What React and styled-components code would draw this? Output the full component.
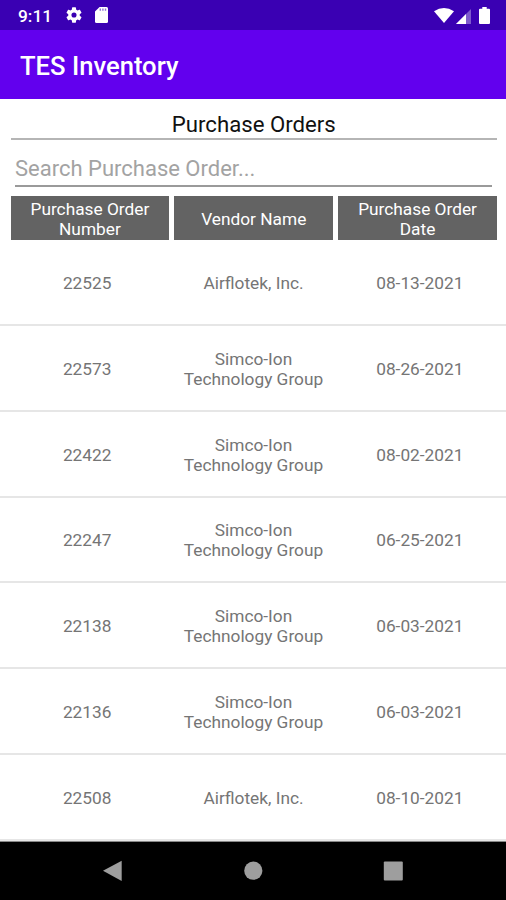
import React from 'react';
import styled, { createGlobalStyle } from 'styled-components';

const orders = [
    { number: '22525', vendor: 'Airflotek, Inc.', date: '08-13-2021' },
    { number: '22573', vendor: 'Simco-Ion Technology Group', date: '08-26-2021' },
    { number: '22422', vendor: 'Simco-Ion Technology Group', date: '08-02-2021' },
    { number: '22247', vendor: 'Simco-Ion Technology Group', date: '06-25-2021' },
    { number: '22138', vendor: 'Simco-Ion Technology Group', date: '06-03-2021' },
    { number: '22136', vendor: 'Simco-Ion Technology Group', date: '06-03-2021' },
    { number: '22508', vendor: 'Airflotek, Inc.', date: '08-10-2021' },
];

const App = () => {
    return (
        <Screen>
            <GlobalStyle />
            <StatusBar>
                <Clock>9:11</Clock>
                <Gear viewBox="2 2 20 20">
                    <path d="M19.14 12.94c.04-.3.06-.61.06-.94s-.02-.64-.07-.94l2.03-1.58a.49.49 0 0 0 .12-.61l-1.92-3.32a.49.49 0 0 0-.59-.22l-2.39.96a7 7 0 0 0-1.62-.94l-.36-2.54a.48.48 0 0 0-.48-.41h-3.84a.47.47 0 0 0-.47.41l-.36 2.54c-.59.24-1.13.57-1.62.94l-2.39-.96a.48.48 0 0 0-.59.22L2.74 8.87a.47.47 0 0 0 .12.61l2.03 1.58c-.05.3-.09.63-.09.94s.02.64.07.94l-2.03 1.58a.49.49 0 0 0-.12.61l1.92 3.32c.12.22.37.29.59.22l2.39-.96c.5.38 1.03.7 1.62.94l.36 2.54c.05.24.24.41.48.41h3.84c.24 0 .44-.17.47-.41l.36-2.54a6.8 6.8 0 0 0 1.62-.94l2.39.96c.22.08.47 0 .59-.22l1.92-3.32a.47.47 0 0 0-.12-.61zM12 15.2a3.2 3.2 0 1 1 0-6.4 3.2 3.2 0 0 1 0 6.4z" />
                </Gear>
                <Card viewBox="0 0 13 16">
                    <path d="M4.6 0H11.5Q13 0 13 1.5V14.5Q13 16 11.5 16H1.5Q0 16 0 14.5V4.6Z" />
                    <Contacts d="M4.6 1.6H6V3.8H4.6ZM7.2 1.6H8.6V3.8H7.2ZM9.8 1.6H11.2V3.8H9.8Z" />
                </Card>
                <Signals>
                    <Wifi viewBox="0 0 20 15">
                        <path d="M0 3.2Q10-3.2 20 3.2L10 15Z" />
                    </Wifi>
                    <Cell viewBox="0 0 15 15">
                        <path opacity=".35" d="M15 0V15H0Z" />
                        <path d="M10 5V15H0Z" />
                    </Cell>
                    <Battery viewBox="0 0 11 17">
                        <path d="M3.3 0H7.7V1.7H10Q11 1.7 11 2.7V16Q11 17 10 17H1Q0 17 0 16V2.7Q0 1.7 1 1.7H3.3Z" />
                    </Battery>
                </Signals>
            </StatusBar>
            <AppBar>TES Inventory</AppBar>
            <Title>Purchase Orders</Title>
            <Search placeholder="Search Purchase Order..." />
            <Headings>
                <Heading>Purchase Order Number</Heading>
                <Heading>Vendor Name</Heading>
                <Heading>Purchase Order Date</Heading>
            </Headings>
            <List>
                {orders.map((order) => (
                    <Row key={order.number}>
                        <Value>{order.number}</Value>
                        <Value>{order.vendor}</Value>
                        <Value>{order.date}</Value>
                    </Row>
                ))}
            </List>
            <NavBar>
                <NavIcon viewBox="0 0 20 22">
                    <path d="M18.7 .7V21L0 10.8Z" />
                </NavIcon>
                <NavIcon viewBox="0 0 20 22">
                    <circle cx="10.3" cy="10.7" r="9.1" />
                </NavIcon>
                <NavIcon viewBox="0 0 20 22">
                    <rect x=".8" y="1.5" width="19" height="19" rx="1" />
                </NavIcon>
            </NavBar>
        </Screen>
    );
};

const GlobalStyle = createGlobalStyle`
    body {
        margin: 0;
        background: #fff;
        font-family: Roboto, sans-serif;
    }
    * {
        box-sizing: border-box;
    }
`

const Screen = styled.main`
    display: flex;
    flex-direction: column;
    width: 506px;
    height: 900px;
    overflow: hidden;
`

const StatusBar = styled.header`
    display: flex;
    align-items: center;
    height: 30px;
    padding: 0 16px 0 18px;
    background: #3a00b3;

    svg {
        fill: #fff;
    }
`

const Clock = styled.span`
    width: 48px;
    padding-top: 2px;
    color: #fff;
    font-size: 17.3px;
    font-weight: 500;
`

const Gear = styled.svg`
    width: 16px;
    height: 16px;
`

const Card = styled.svg`
    width: 13px;
    height: 16px;
    margin-left: 13px;
`

const Contacts = styled.path`
    fill: #8f70d6;
`

const Signals = styled.div`
    display: flex;
    align-items: flex-end;
    margin-left: auto;
`

const Wifi = styled.svg`
    width: 20px;
    height: 15px;
    margin-bottom: 1px;
`

const Cell = styled.svg`
    width: 15px;
    height: 15px;
    margin: 0 8px 0 2px;
`

const Battery = styled.svg`
    width: 11px;
    height: 17px;
`

const AppBar = styled.div`
    display: flex;
    align-items: center;
    height: 68.6px;
    padding: 3px 20px 0;
    background: #6200ee;
    color: #fff;
    font-size: 25.6px;
    font-weight: 500;
`

const Title = styled.h1`
    height: 41.8px;
    margin: 0 9px 0 10.5px;
    padding-top: 11px;
    border-bottom: 2px solid #b5b5b5;
    color: #111;
    font-size: 22.2px;
    font-weight: 400;
    line-height: 28px;
    text-align: center;
`

const Search = styled.input`
    height: 46.6px;
    margin: 0 14px 0 15px;
    padding: 12px 0 0;
    border: 0;
    border-bottom: 2px solid #9a9a9a;
    outline: 0;
    font-family: inherit;
    font-size: 22px;

    &::placeholder {
        color: #a3a3a3;
    }
`

const Headings = styled.div`
    display: grid;
    grid-template-columns: repeat(3, 1fr);
    gap: 5px;
    height: 44px;
    margin: 9px 9px 0 10.5px;
`

const Heading = styled.div`
    display: flex;
    align-items: center;
    justify-content: center;
    padding: 2px 14px 0;
    background: #636363;
    color: #fff;
    font-size: 17.3px;
    line-height: 20px;
    text-align: center;
`

const List = styled.section`
    display: flex;
    flex-direction: column;
    height: 602px;
    border-bottom: 1px solid #888;
`

const Row = styled.div`
    display: grid;
    grid-template-columns: repeat(3, 1fr);
    align-items: center;
    flex: 0 0 85.85px;
    padding: 2px 3px 0 4px;
    border-bottom: 2px solid #e6e6e6;
`

const Value = styled.p`
    margin: 0;
    padding: 0 8px;
    color: #757575;
    font-size: 17.3px;
    line-height: 20px;
    text-align: center;
`

const NavBar = styled.nav`
    display: flex;
    flex: 1;
    justify-content: center;
    gap: 120px;
    padding-top: 18px;
    background: #000;
`

const NavIcon = styled.svg`
    width: 20px;
    height: 22px;
    fill: #9e9e9e;
`

export default App;
